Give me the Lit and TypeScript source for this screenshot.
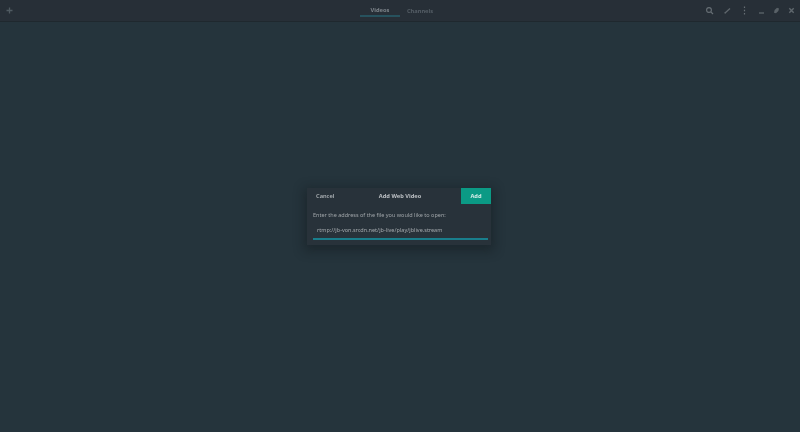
import { LitElement, html, css } from "lit";
import { customElement } from "lit/decorators.js";

@customElement("app-root")
export class AppRoot extends LitElement {
  static styles = css`
    :host { display: block; width: 800px; height: 432px; position: relative; overflow: hidden;
      background: #25343c; font-family: "Noto Sans", "Open Sans", sans-serif; }
    .window { display: flex; flex-direction: column; height: 100%; }
    .header { height: 21px; flex: none; display: grid; grid-template-columns: 1fr auto 1fr; align-items: center;
      background: #272f37; border-bottom: 1px solid #1f282e; }
    .left { padding-left: 5px; display: flex; align-items: center; }
    .tabs { display: flex; height: 100%; }
    .tab { width: 40px; display: flex; align-items: center; justify-content: center; font-size: 5.7px; font-weight: 700;
      color: #7f868c; box-sizing: border-box; height: 17px; padding-top: 4px; filter: blur(0.5px); }
    .tab.off { color: #555e66; }
    .tab.on { border-bottom: 2px solid #27525e; }
    .right { display: flex; justify-content: flex-end; align-items: center; padding-right: 4px; }
    .right svg { margin-left: 10px; }
    .right svg.wide { margin-left: 9px; }
    .right svg.tight { margin-left: 6px; }
    svg { display: block; filter: blur(0.5px); }
    .main { flex: 1; }
    .overlay { position: absolute; inset: 0; display: flex; align-items: center; justify-content: center; padding-top: 1px; }
    .dialog { width: 184px; height: 57px; margin-left: -2px; background: #28323a; display: flex; flex-direction: column;
      box-shadow: 0 3px 10px 3px rgba(18, 24, 28, .45); filter: blur(0.5px); }
    .dhead { height: 16px; display: grid; grid-template-columns: 1fr auto 1fr; align-items: center; flex: none; }
    .cancel { font-size: 5.7px; font-weight: 600; color: #aeb3b7; padding-left: 9px; }
    .title { font-size: 5.7px; font-weight: 700; color: #bcc0c4; margin-left: 2px; }
    .add { justify-self: end; width: 30px; height: 16px; background: #0b9a85; color: #d6ece8; font-size: 5.7px; font-weight: 700;
      display: flex; align-items: center; justify-content: center; }
    .body { padding: 6.5px 3px 0 6px; display: flex; flex-direction: column; }
    .label { font-size: 5.5px; color: #9fa4a8; line-height: 9px; white-space: nowrap; }
    .input { margin-top: 5px; height: 15px; box-sizing: border-box; border-bottom: 2px solid #197e8c; font-size: 5.5px; color: #a4a9ad;
      padding-left: 4px; line-height: 10px; white-space: nowrap; }
  `;

  render() {
    return html`
      <div class="window">
        <div class="header">
          <div class="left">
            <svg width="9" height="9" viewBox="0 0 9 9"><path d="M4.5 1.5v6M1.5 4.5h6" stroke="#505b62" stroke-width="1.3" fill="none"/></svg>
          </div>
          <div class="tabs">
            <div class="tab on">Videos</div>
            <div class="tab off">Channels</div>
          </div>
          <div class="right">
            <svg width="9" height="9" viewBox="0 0 9 9"><circle cx="4" cy="4" r="2.4" stroke="#676f75" stroke-width="1.1" fill="none"/><path d="M5.8 5.8 8 8" stroke="#676f75" stroke-width="1.2"/></svg>
            <svg class="wide" width="9" height="9" viewBox="0 0 9 9"><path d="M2 7 7 2.5" stroke="#5f676d" stroke-width="1.3"/><path d="M1.5 7.5 3 7.5 1.5 6z" fill="#5f676d"/></svg>
            <svg width="5" height="9" viewBox="0 0 5 9"><path d="M2.5 .5v1.6M2.5 3.7v1.6M2.5 6.9v1.6" stroke="#676f75" stroke-width="1.2"/></svg>
            <svg width="9" height="9" viewBox="0 0 9 9"><path d="M2 7h5" stroke="#676f75" stroke-width="1.1"/></svg>
            <svg class="tight" width="9" height="9" viewBox="0 0 9 9"><path d="M2 6.8 2.6 4 5 1.8 7 2.4 6.4 5 4 7.2z" fill="#596167"/></svg>
            <svg class="tight" width="9" height="9" viewBox="0 0 9 9"><path d="M2.3 2.3 6.7 6.7M6.7 2.3 2.3 6.7" stroke="#5f676d" stroke-width="1.4"/></svg>
          </div>
        </div>
        <div class="main"></div>
      </div>
      <div class="overlay">
        <div class="dialog">
          <div class="dhead">
            <div class="cancel">Cancel</div>
            <div class="title">Add Web Video</div>
            <div class="add">Add</div>
          </div>
          <div class="body">
            <div class="label">Enter the address of the file you would like to open:</div>
            <div class="input">rtmp://jb-von.srcdn.net/jb-live/play/jblive.stream</div>
          </div>
        </div>
      </div>
    `;
  }
}
